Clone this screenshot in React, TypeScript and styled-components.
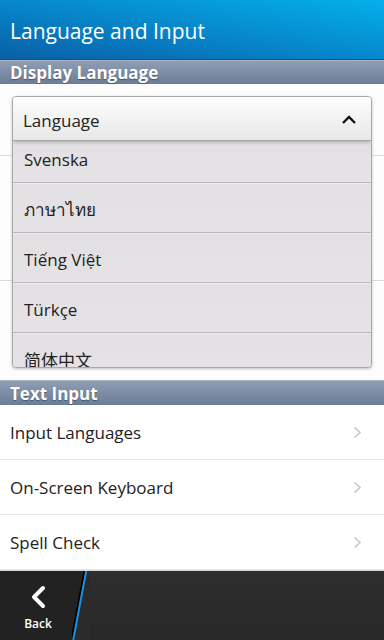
import React from "react";
import styled, { createGlobalStyle } from "styled-components";

const GlobalStyle = createGlobalStyle`
  html, body {
    margin: 0;
    padding: 0;
    background: #fff;
  }
  body {
    font-family: "Open Sans", "Noto Sans", "Noto Sans CJK SC", sans-serif;
    color: #222;
  }
`;

const Screen = styled.div`
  width: 384px;
  height: 640px;
  display: flex;
  flex-direction: column;
  overflow: hidden;
  background: #fdfdfd;
`;

const TitleBar = styled.div`
  height: 60px;
  flex-shrink: 0;
  display: flex;
  align-items: center;
  padding: 2px 10px 0;
  box-sizing: border-box;
  background: linear-gradient(to top right, #0a5fa6 0%, #0788cc 50%, #04b0ea 100%);
  color: #fff;
  font-size: 21px;
  border-bottom: 1px solid #0a5590;
`;

const SectionHeader = styled.div<{ $h: number }>`
  height: ${(p) => p.$h}px;
  flex-shrink: 0;
  display: flex;
  align-items: center;
  padding: 0 10px;
  box-sizing: border-box;
  background: linear-gradient(to bottom, #909eb4, #6a7c97);
  border-top: 1px solid #a9b3c2;
  color: #fff;
  font-weight: 700;
  font-size: 17px;
  text-shadow: 0 1px 1px rgba(0, 0, 0, 0.35);
`;

const DisplaySection = styled.div`
  position: relative;
  height: 296px;
  flex-shrink: 0;
  display: flex;
  flex-direction: column;
`;

const BackRow = styled.div<{ $h: number }>`
  height: ${(p) => p.$h}px;
  flex-shrink: 0;
  border-bottom: 1px solid #dcdcdc;
`;

const Dropdown = styled.div`
  position: absolute;
  top: 12px;
  left: 12px;
  right: 12px;
  height: 272px;
  display: flex;
  flex-direction: column;
  border: 1px solid #a9a9a9;
  border-radius: 4px;
  box-sizing: border-box;
  overflow: hidden;
  background: #e3e1e3;
  box-shadow: 0 1px 3px rgba(0, 0, 0, 0.25);
`;

const DropdownHead = styled.div`
  height: 44px;
  flex-shrink: 0;
  display: flex;
  align-items: center;
  justify-content: space-between;
  padding: 3px 14px 0 10px;
  box-sizing: border-box;
  background: linear-gradient(to bottom, #fefefe, #e9e7e9);
  border-bottom: 1px solid #a5a5a5;
  box-shadow: 0 2px 3px rgba(0, 0, 0, 0.18);
  font-size: 17px;
  position: relative;
  z-index: 1;
`;

const Options = styled.div`
  flex: 1;
  overflow: hidden;
`;

const OptionList = styled.div`
  margin-top: -8px;
`;

const Option = styled.div`
  height: 50px;
  display: flex;
  align-items: center;
  padding: 3px 11px 0;
  box-sizing: border-box;
  font-size: 17px;
  color: #222;
  border-bottom: 1px solid #b8b8b8;
  border-top: 1px solid #ececec;
  background: linear-gradient(to bottom, #e2e0e2, #e5e3e5);
`;

const ListRow = styled.div`
  height: 55px;
  flex-shrink: 0;
  display: flex;
  align-items: center;
  justify-content: space-between;
  padding: 1px 22px 0 10px;
  box-sizing: border-box;
  border-bottom: 1px solid #e6e6e6;
  background: #fff;
  font-size: 17px;
  color: #222;
  &:last-child {
    border-bottom: none;
  }
`;

const ActionBar = styled.div`
  height: 70px;
  flex-shrink: 0;
  display: flex;
  background: #2b2b2c;
  border-top: 1px solid #d8d8d8;
  box-sizing: border-box;
`;

const BackButton = styled.div`
  width: 72px;
  display: flex;
  flex-direction: column;
  align-items: center;
  justify-content: center;
  gap: 6px;
  background: #222223;
  color: #fff;
  font-size: 12px;
  font-weight: 600;
  padding: 6px 0 0 4px;
  box-sizing: border-box;
`;

const Divider = styled.svg`
  flex-shrink: 0;
  display: block;
`;

const Rest = styled.div`
  flex: 1;
  background: linear-gradient(to bottom, #2e2e2f, #282829);
`;

const Chevron = () => (
  <svg width="9" height="13" viewBox="0 0 9 13">
    <path d="M1.5 1.5 L7 6.5 L1.5 11.5" fill="none" stroke="#c6c6c6" strokeWidth="1.6" />
  </svg>
);

const options = ["Svenska", "ภาษาไทย", "Tiếng Việt", "Türkçe", "简体中文"];
const rows = ["Input Languages", "On-Screen Keyboard", "Spell Check"];

const App = () => {
  return (
    <>
      <GlobalStyle />
      <Screen>
        <TitleBar>Language and Input</TitleBar>
        <SectionHeader $h={24}>Display Language</SectionHeader>
        <DisplaySection>
          <BackRow $h={71} />
          <BackRow $h={124} />
          <Dropdown>
            <DropdownHead>
              <span>Language</span>
              <svg width="16" height="10" viewBox="0 0 16 10">
                <path d="M2 8 L8 2 L14 8" fill="none" stroke="#111" strokeWidth="2.4" />
              </svg>
            </DropdownHead>
            <Options>
              <OptionList>
                {options.map((o) => (
                  <Option key={o}>{o}</Option>
                ))}
              </OptionList>
            </Options>
          </Dropdown>
        </DisplaySection>
        <SectionHeader $h={25}>Text Input</SectionHeader>
        {rows.map((r) => (
          <ListRow key={r}>
            <span>{r}</span>
            <Chevron />
          </ListRow>
        ))}
        <ActionBar>
          <BackButton>
            <svg width="16" height="24" viewBox="0 0 16 24">
              <path d="M13 3 L4 12 L13 21" fill="none" stroke="#fff" strokeWidth="4" strokeLinecap="round" strokeLinejoin="round" />
            </svg>
            <span>Back</span>
          </BackButton>
          <Divider width="18" height="69" viewBox="0 0 18 69">
            <polygon points="0,0 14,0 1,69 0,69" fill="#222223" />
            <line x1="12.5" y1="0" x2="-0.5" y2="69" stroke="#000" strokeWidth="2" />
            <line x1="14.2" y1="0" x2="1.2" y2="69" stroke="#1a8fe3" strokeWidth="2" />
          </Divider>
          <Rest />
        </ActionBar>
      </Screen>
    </>
  );
};

export default App;
